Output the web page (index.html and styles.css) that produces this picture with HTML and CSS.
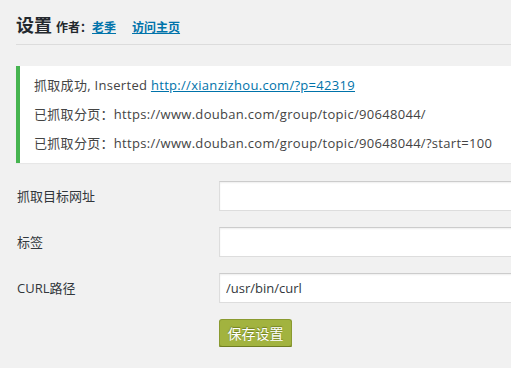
FILE: index.html
```html
<!DOCTYPE html>
<html lang="zh-CN">
<head>
<meta charset="utf-8">
<title>设置</title>
<link rel="stylesheet" href="styles.css">
</head>
<body>
<div class="wrap">
  <div class="header">
    <h2 class="title">设置</h2>
    <span class="meta">作者：<a href="#">老季</a></span>
    <a class="meta home" href="#">访问主页</a>
  </div>

  <div class="notice">
    <p>抓取成功, Inserted <a href="#">http://xianzizhou.com/?p=42319</a></p>
    <p>已抓取分页：https://www.douban.com/group/topic/90648044/</p>
    <p>已抓取分页：https://www.douban.com/group/topic/90648044/?start=100</p>
  </div>

  <form class="form">
    <label class="label" for="url">抓取目标网址</label>
    <input class="field" id="url" type="text" value="">
    <label class="label" for="tags">标签</label>
    <input class="field" id="tags" type="text" value="">
    <label class="label" for="curl">CURL路径</label>
    <input class="field" id="curl" type="text" value="/usr/bin/curl">
    <span></span>
    <div><button class="btn" type="button">保存设置</button></div>
  </form>
</div>
</body>
</html>
```

FILE: styles.css
```css
html, body {
  margin: 0;
  padding: 0;
  overflow: hidden;
  background: #f1f1f1;
}
body {
  font-family: "Open Sans", "Noto Sans CJK SC", sans-serif;
  font-size: 13px;
  color: #444;
}
.wrap {
  margin: 0 -40px 0 16px;
}
.header {
  display: flex;
  align-items: baseline;
  padding-top: 12px;
  padding-bottom: 8px;
  border-bottom: 1px solid #dcdcdc;
  height: 24px;
}
.title {
  margin: 0 4px 0 0;
  font-family: "Noto Sans CJK SC", sans-serif;
  font-size: 18px;
  line-height: 24px;
  font-weight: 700;
  color: #23282d;
}
.meta {
  font-family: "Noto Sans CJK SC", sans-serif;
  font-size: 12px;
  font-weight: 700;
  color: #23282d;
}
.meta a, a.meta {
  color: #0073aa;
}
.home {
  margin-left: 16px;
}
.notice {
  margin-top: 21px;
  background: #fff;
  border-left: 4px solid #46b450;
  box-shadow: 0 1px 1px rgba(0,0,0,0.04);
  padding: 2px 12px;
}
.notice p {
  margin: 6px 0;
  padding: 2px;
  line-height: 19px;
  letter-spacing: 0.3px;
}
.notice a {
  color: #0073aa;
}
.form {
  margin-top: 18px;
  display: grid;
  grid-template-columns: 203px 330px;
  row-gap: 16px;
  align-items: center;
}
.label {
  padding-left: 1px;
  color: #32373c;
  line-height: 20px;
}
.field {
  box-sizing: border-box;
  height: 30px;
  margin: 0;
  padding: 0 6px;
  border: 1px solid #ddd;
  border-top-color: #ccc;
  box-shadow: inset 0 1px 2px rgba(0,0,0,0.07);
  background: #fff;
  font-family: "Open Sans", "Noto Sans CJK SC", sans-serif;
  font-size: 13px;
  color: #32373c;
  outline: none;
}
.btn {
  box-sizing: border-box;
  width: 73px;
  height: 28px;
  margin: 0;
  padding: 0;
  background: #a2b33f;
  border: 1px solid #8a9a30;
  border-bottom-color: #6f7d22;
  border-radius: 3px;
  color: #fff;
  font-family: "Noto Sans CJK SC", sans-serif;
  font-size: 14px;
  text-shadow: 0 -1px 1px #6f7d22;
  box-shadow: 0 1px 0 #7c8b28;
}
```
